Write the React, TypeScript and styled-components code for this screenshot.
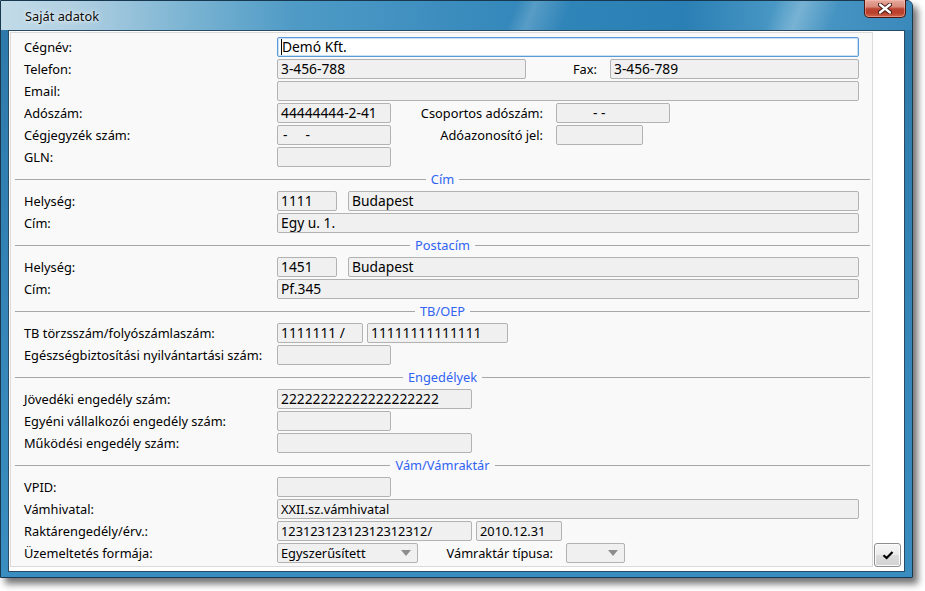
import React from "react";
import styled, { createGlobalStyle } from "styled-components";

const Global = createGlobalStyle`
  html, body { margin: 0; padding: 0; background: #ffffff; }
  body { font-family: "Noto Sans", "DejaVu Sans", sans-serif; font-size: 12.8px; color: #000; }
  * { box-sizing: border-box; }
`;

const Page = styled.div`
  width: 925px;
  height: 591px;
  padding: 0;
`;

const Window = styled.div`
  width: 913px;
  height: 578px;
  display: flex;
  flex-direction: column;
  border: 1px solid #17384f;
  border-radius: 0 6px 0 0;
  background: linear-gradient(180deg, #2d78a8 0%, #3686b9 60%, #3a8dc0 100%);
  box-shadow: 5px 6px 7px rgba(0, 0, 0, 0.55);
`;

const TitleBar = styled.div`
  height: 29px;
  display: flex;
  align-items: flex-start;
  background:
    linear-gradient(112deg, transparent 56%, rgba(255,255,255,0.18) 58%, transparent 62%),
    linear-gradient(112deg, transparent 84%, rgba(255,255,255,0.25) 87%, transparent 91%),
    linear-gradient(90deg, #c2dbe8 0%, #b1d0e2 8%, #7db5d3 20%, #4f9bc6 32%, #3d8ebf 48%, #2f84b8 62%, #2a7fb4 75%, #4c9ac6 86%, #3a89bb 100%);
  border-radius: 0 5px 0 0;
`;

const Title = styled.span`
  margin: 6px 0 0 24px;
  font-size: 12.8px;
  color: #0b0b0b;
  text-shadow: 0 0 6px rgba(255, 255, 255, 0.9), 0 0 3px rgba(255, 255, 255, 0.8);
`;

const CloseButton = styled.div`
  margin-left: auto;
  margin-right: 6px;
  width: 42px;
  height: 18px;
  margin-top: -1px;
  border: 1px solid #4a1510;
  border-top: none;
  border-radius: 0 0 5px 5px;
  display: flex;
  align-items: center;
  justify-content: center;
  background: linear-gradient(180deg, #e7aa9c 0%, #d8897a 40%, #bb4430 52%, #b93f2b 75%, #d0664c 100%);
  box-shadow: inset 0 0 0 1px rgba(255, 200, 190, 0.45);
`;

const Client = styled.div`
  flex: 1;
  margin: 0 7px 5px 7px;
  border: 1px solid #2a4a63;
  background: #ffffff;
  display: flex;
  padding: 1px 3px 4px 1px;
`;

const Panel = styled.div`
  width: 863px;
  border: 1px solid #dadada;
  background: #f9f9f9;
  display: flex;
  flex-direction: column;
  gap: 2px;
  padding-top: 4px;
`;

const Side = styled.div`
  flex: 1;
  display: flex;
  align-items: flex-end;
  justify-content: flex-end;
`;

const OkButton = styled.div`
  width: 27px;
  height: 24px;
  border: 1px solid #8e8e8e;
  border-radius: 3px;
  background: linear-gradient(180deg, #f6f6f6 0%, #ececec 48%, #dcdcdc 52%, #d2d2d2 100%);
  display: flex;
  align-items: center;
  justify-content: center;
  box-shadow: inset 0 0 0 1px #fbfbfb;
`;

const Row = styled.div`
  height: 20px;
  display: flex;
  align-items: center;
  padding: 0 13px;
`;

const Label = styled.div`
  width: 253px;
  flex: none;
  white-space: nowrap;
  font-size: 12.8px;
  line-height: 17px;
`;

const SideLabel = styled.div<{ $w?: number }>`
  ${(p) => (p.$w ? `width: ${p.$w}px; flex: none;` : `flex: 1;`)}
  text-align: right;
  padding-right: 13px;
  white-space: nowrap;
  font-size: 12.8px;
`;

const Field = styled.div<{ $w?: number; $indent?: number; $focus?: boolean; $small?: boolean }>`
  ${(p) => (p.$w ? `width: ${p.$w}px; flex: none;` : `flex: 1;`)}
  height: 20px;
  border: 1px solid ${(p) => (p.$focus ? "#5b9bd5" : "#b2b2b2")};
  border-radius: 2px;
  background: ${(p) => (p.$focus ? "#ffffff" : "#f0f0f0")};
  padding-left: ${(p) => p.$indent ?? 3}px;
  font-size: ${(p) => (p.$small ? "12.8px" : "13.8px")};
  line-height: 18px;
  white-space: pre;
  overflow: hidden;
  display: flex;
  align-items: center;
  ${(p) => (p.$focus ? "box-shadow: inset 0 0 0 1px #c9e1f6;" : "")}
`;

const Caret = styled.span`
  width: 1px;
  height: 16px;
  background: #000;
  flex: none;
`;

const Spacer = styled.div<{ $w: number }>`
  width: ${(p) => p.$w}px;
  flex: none;
`;

const Select = styled.div<{ $w: number }>`
  width: ${(p) => p.$w}px;
  flex: none;
  height: 20px;
  border: 1px solid #b2b2b2;
  border-radius: 2px;
  background: #f0f0f0;
  padding: 0 6px 0 3px;
  display: flex;
  align-items: center;
  justify-content: space-between;
  font-size: 12.8px;
`;

const Arrow = styled.span`
  width: 0;
  height: 0;
  border-left: 5px solid transparent;
  border-right: 5px solid transparent;
  border-top: 6px solid #8c8c8c;
  margin-left: auto;
`;

const Divider = styled.div`
  height: 20px;
  margin: 0 2px 0 4px;
  display: flex;
  align-items: center;
  gap: 5px;
  &::before,
  &::after {
    content: "";
    flex: 1;
    height: 1px;
    background: #a7a7a7;
  }
`;

const DividerTitle = styled.span`
  color: #2f63f2;
  font-size: 12.8px;
  line-height: 17px;
`;

const Section: React.FC<{ title: string }> = ({ title }) => (
  <Divider>
    <DividerTitle>{title}</DividerTitle>
  </Divider>
);

export default function App() {
  return (
    <Page>
      <Global />
      <Window>
        <TitleBar>
          <Title>Saját adatok</Title>
          <CloseButton>
            <svg width="14" height="11" viewBox="0 0 14 11">
              <path d="M2 1.5 L12 9.5 M12 1.5 L2 9.5" stroke="#3d1410" strokeWidth="4.2" strokeLinecap="round" />
              <path d="M2 1.5 L12 9.5 M12 1.5 L2 9.5" stroke="#ffffff" strokeWidth="2.3" strokeLinecap="round" />
            </svg>
          </CloseButton>
        </TitleBar>
        <Client>
          <Panel>
            <Row>
              <Label>Cégnév:</Label>
              <Field $focus $indent={3}>
                <Caret />
                Demó Kft.
              </Field>
            </Row>
            <Row>
              <Label>Telefon:</Label>
              <Field $w={249}>3-456-788</Field>
              <SideLabel>Fax:</SideLabel>
              <Field $w={249}>3-456-789</Field>
            </Row>
            <Row>
              <Label>Email:</Label>
              <Field />
            </Row>
            <Row>
              <Label>Adószám:</Label>
              <Field $w={114}>44444444-2-41</Field>
              <SideLabel $w={165}>Csoportos adószám:</SideLabel>
              <Field $w={114} $indent={36}>{"- -"}</Field>
            </Row>
            <Row>
              <Label>Cégjegyzék szám:</Label>
              <Field $w={114} $indent={5}>{"-     -"}</Field>
              <SideLabel $w={165}>Adóazonosító jel:</SideLabel>
              <Field $w={87} />
            </Row>
            <Row>
              <Label>GLN:</Label>
              <Field $w={114} />
            </Row>

            <Section title="Cím" />
            <Row>
              <Label>Helység:</Label>
              <Field $w={60}>1111</Field>
              <Spacer $w={11} />
              <Field>Budapest</Field>
            </Row>
            <Row>
              <Label>Cím:</Label>
              <Field>Egy u. 1.</Field>
            </Row>

            <Section title="Postacím" />
            <Row>
              <Label>Helység:</Label>
              <Field $w={60}>1451</Field>
              <Spacer $w={11} />
              <Field>Budapest</Field>
            </Row>
            <Row>
              <Label>Cím:</Label>
              <Field>Pf.345</Field>
            </Row>

            <Section title="TB/OEP" />
            <Row>
              <Label>TB törzsszám/folyószámlaszám:</Label>
              <Field $w={86}>1111111 /</Field>
              <Spacer $w={4} />
              <Field $w={141}>11111111111111</Field>
            </Row>
            <Row>
              <Label>Egészségbiztosítási nyilvántartási szám:</Label>
              <Field $w={114} />
            </Row>

            <Section title="Engedélyek" />
            <Row>
              <Label>Jövedéki engedély szám:</Label>
              <Field $w={195}>22222222222222222222</Field>
            </Row>
            <Row>
              <Label>Egyéni vállalkozói engedély szám:</Label>
              <Field $w={114} />
            </Row>
            <Row>
              <Label>Működési engedély szám:</Label>
              <Field $w={195} />
            </Row>

            <Section title="Vám/Vámraktár" />
            <Row>
              <Label>VPID:</Label>
              <Field $w={114} $small />
            </Row>
            <Row>
              <Label>Vámhivatal:</Label>
              <Field $small>XXII.sz.vámhivatal</Field>
            </Row>
            <Row>
              <Label>Raktárengedély/érv.:</Label>
              <Field $w={195} $small>12312312312312312312/</Field>
              <Spacer $w={4} />
              <Field $w={86} $small>2010.12.31</Field>
            </Row>
            <Row>
              <Label>Üzemeltetés formája:</Label>
              <Select $w={141}>
                Egyszerűsített
                <Arrow />
              </Select>
              <SideLabel $w={148}>Vámraktár típusa:</SideLabel>
              <Select $w={59}>
                <Arrow />
              </Select>
            </Row>
          </Panel>
          <Side>
            <OkButton>
              <svg width="12" height="10" viewBox="0 0 12 10">
                <path d="M1.5 5.2 L4.6 8 L10.5 2" fill="none" stroke="#000" strokeWidth="2.2" />
              </svg>
            </OkButton>
          </Side>
        </Client>
      </Window>
    </Page>
  );
}
